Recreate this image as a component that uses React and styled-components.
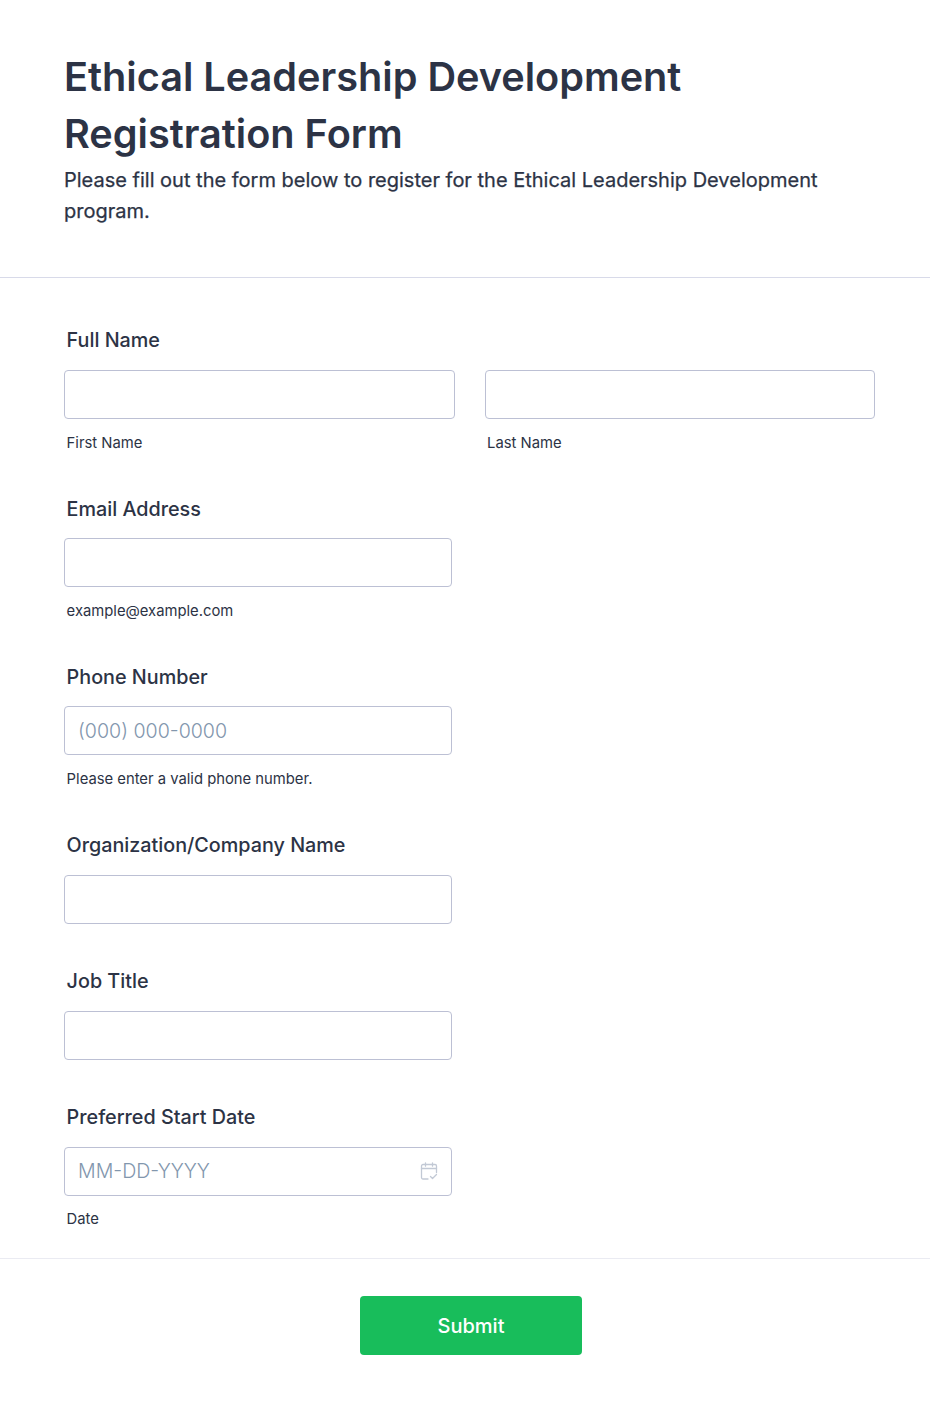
import React from 'react';
import styled, { createGlobalStyle } from 'styled-components';

const GlobalStyle = createGlobalStyle`
  html, body {
    margin: 0;
    padding: 0;
    background: #fff;
  }
  * {
    box-sizing: border-box;
  }
`;

const Page = styled.div`
  width: 930px;
  height: 1405px;
  font-family: Inter, "Liberation Sans", sans-serif;
  color: #2c3345;
  background: #fff;
`;

const Header = styled.header`
  height: 278px;
  padding: 49px 64px 0;
  border-bottom: 1px solid #d8dae9;
`;

const Title = styled.h1`
  margin: 0;
  font-size: 39.65px;
  line-height: 57px;
  font-weight: 600;
  max-width: 760px;
`;

const Subtitle = styled.p`
  margin: 2px 0 0;
  font-size: 20px;
  line-height: 31px;
  font-weight: 400;
  -webkit-text-stroke: 0.25px #2c3345;
`;

const Form = styled.form`
  padding: 50px 0 0 64px;
  height: 981px;
  border-bottom: 1px solid #eaebf2;
`;

const Field = styled.div`
  height: ${({ $tall }) => ($tall ? '168.2px' : '136px')};
`;

const Label = styled.label`
  display: block;
  padding: 0.4px 0 0 2.6px;
  font-size: 19.75px;
  line-height: 24px;
  font-weight: 500;
  margin-bottom: 17.6px;
`;

const Row = styled.div`
  display: flex;
  gap: 30px;
`;

const Column = styled.div`
  width: ${({ $width }) => $width}px;
`;

const InputBox = styled.div`
  position: relative;
  height: 49px;
`;

const Input = styled.input`
  display: block;
  width: 100%;
  height: 100%;
  padding: 0 13px;
  border: 1px solid #bcc0d4;
  border-radius: 4px;
  background: #fff;
  font-family: inherit;
  font-size: 19.6px;
  color: #2c3345;
  outline: none;

  &::placeholder {
    color: #8296ad;
    font-weight: 300;
    opacity: 1;
  }
`;

const Sub = styled.div`
  padding-left: 2.6px;
  margin-top: 14.7px;
  font-size: 14.8px;
  line-height: 18px;
`;

const DateIcon = styled.svg`
  position: absolute;
  top: 15px;
  right: 14px;
  width: 18px;
  height: 18px;
  fill: none;
  stroke: #c2c9d5;
  stroke-width: 1.3;
  stroke-linecap: round;
  stroke-linejoin: round;
`;

const Footer = styled.div`
  display: flex;
  padding: 37px 0 0 360px;
`;

const Submit = styled.button`
  width: 222px;
  height: 59px;
  border: none;
  border-radius: 4px;
  background: #18bd5b;
  color: #fff;
  font-family: inherit;
  font-size: 20px;
  font-weight: 500;
`;

export default function App() {
  return (
    <Page>
      <GlobalStyle />
      <Header>
        <Title>Ethical Leadership Development Registration Form</Title>
        <Subtitle>Please fill out the form below to register for the Ethical Leadership Development program.</Subtitle>
      </Header>
      <Form>
        <Field $tall>
          <Label>Full Name</Label>
          <Row>
            <Column $width={390.5}>
              <InputBox><Input /></InputBox>
              <Sub>First Name</Sub>
            </Column>
            <Column $width={390.5}>
              <InputBox><Input /></InputBox>
              <Sub>Last Name</Sub>
            </Column>
          </Row>
        </Field>
        <Field $tall>
          <Label>Email Address</Label>
          <Column $width={388}>
            <InputBox><Input /></InputBox>
            <Sub>example@example.com</Sub>
          </Column>
        </Field>
        <Field $tall>
          <Label>Phone Number</Label>
          <Column $width={388}>
            <InputBox><Input placeholder="(000) 000-0000" /></InputBox>
            <Sub>Please enter a valid phone number.</Sub>
          </Column>
        </Field>
        <Field>
          <Label>Organization/Company Name</Label>
          <Column $width={388}>
            <InputBox><Input /></InputBox>
          </Column>
        </Field>
        <Field>
          <Label>Job Title</Label>
          <Column $width={388}>
            <InputBox><Input /></InputBox>
          </Column>
        </Field>
        <Field $tall>
          <Label>Preferred Start Date</Label>
          <Column $width={388}>
            <InputBox>
              <Input placeholder="MM-DD-YYYY" />
              <DateIcon viewBox="0 0 18 18">
                <path d="M8 17H3a1.5 1.5 0 0 1-1.5-1.5V4A1.5 1.5 0 0 1 3 2.5h12A1.5 1.5 0 0 1 16.5 4v6.5" />
                <path d="M1.5 6.5h15M5.5 .8v3.4M12.5 .8v3.4" />
                <path d="M10.5 14.5l2 2 4-4" />
              </DateIcon>
            </InputBox>
            <Sub>Date</Sub>
          </Column>
        </Field>
      </Form>
      <Footer>
        <Submit type="button">Submit</Submit>
      </Footer>
    </Page>
  );
}
